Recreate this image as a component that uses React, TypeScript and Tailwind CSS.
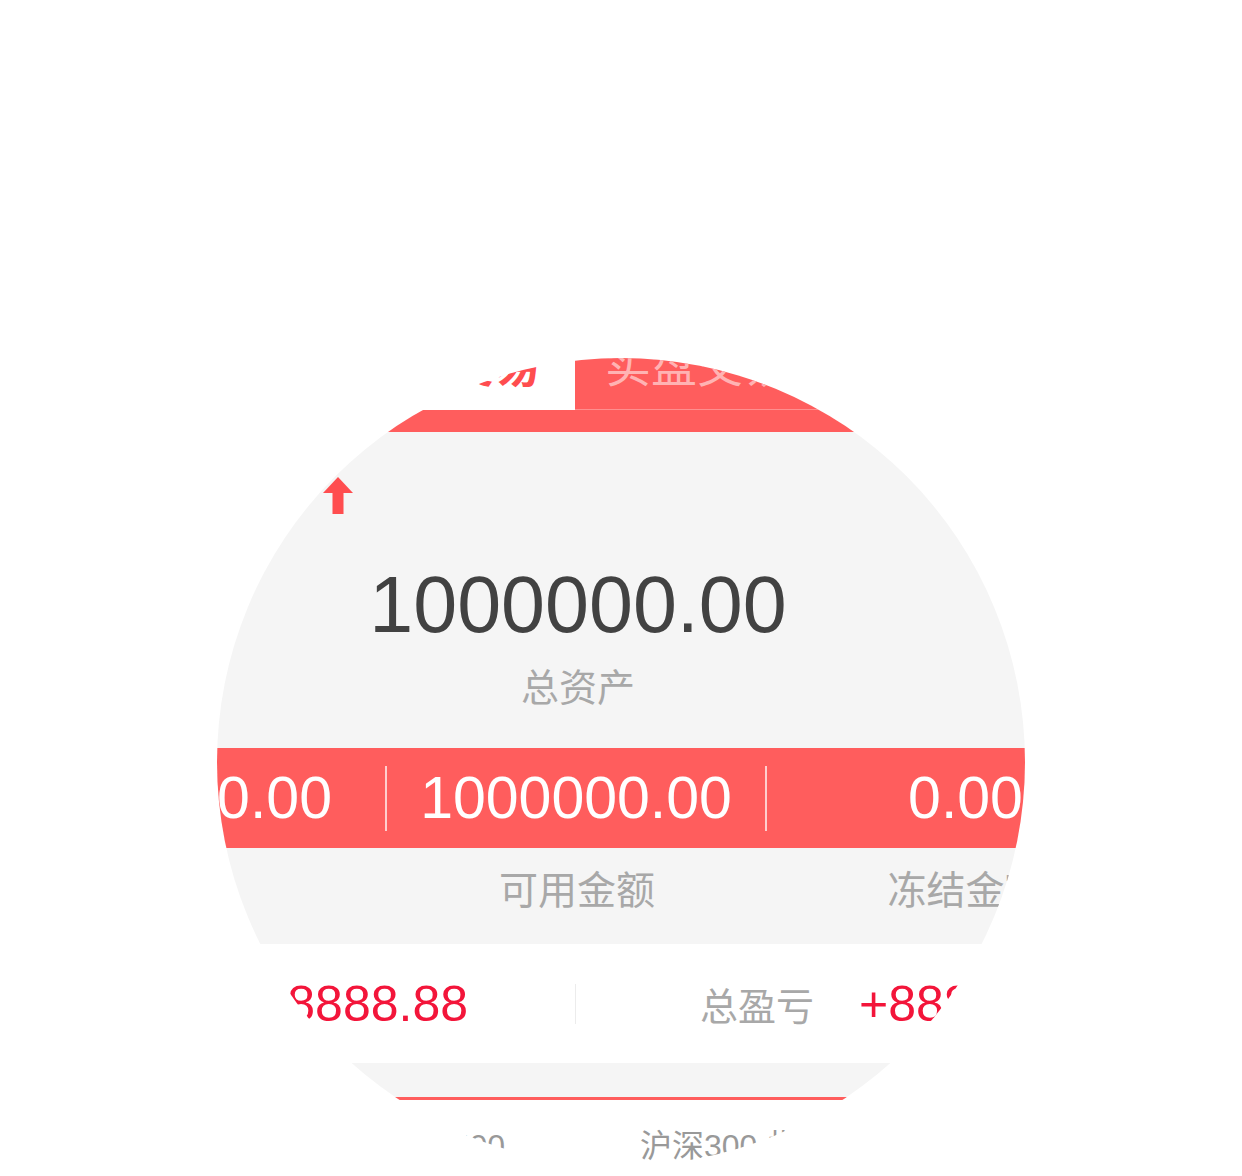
import React from "react";

// zoomed-in view of an account summary screen, clipped to a round lens
function UpArrow() {
  return (
    <svg width="30" height="37" viewBox="0 0 30 37" fill="#ff4d4f">
      <polygon points="0,16 15,0 30,16" />
      <rect x="9.5" y="15" width="11" height="22" />
    </svg>
  );
}

function StatCol({ value, className }: { value: string; className: string }) {
  return (
    <div className={className}>
      <span>{value}</span>
    </div>
  );
}

export default function App() {
  return (
    <div className="w-[1242px] h-[1176px] bg-white pt-[358px] pl-[217px] font-['Liberation_Sans','Noto_Sans_CJK_SC',sans-serif]">
      <div className="w-[808px] h-[808px] rounded-full overflow-hidden">
        <div className="-ml-[217px] -mt-[48px] w-[1156px]">
          {/* tabs */}
          <div className="flex h-[100px]">
            <div className="w-[575px] bg-white flex justify-end pr-[35px] pt-[33px]">
              <span className="text-[46px] leading-none text-[#ff4d4f] font-bold">模拟交易</span>
            </div>
            <div className="flex-1 bg-[#ff5d5d] border-b border-white/30 pl-[30px] pt-[33px]">
              <span className="text-[46px] leading-none text-[#ffb3b3]">实盘交易</span>
            </div>
          </div>
          <div className="h-[22px] bg-[#ff5d5d]" />

          {/* total assets */}
          <div className="h-[316px] bg-[#f5f5f5] pt-[45px]">
            <div className="pl-[323px]">
              <UpArrow />
            </div>
            <div className="mt-[51px] text-center text-[79px] leading-none text-[#424242]">1000000.00</div>
            <div className="mt-[22px] text-center text-[38px] leading-none text-[#a8a8a8] font-['Noto_Sans_CJK_SC',sans-serif]">
              总资产
            </div>
          </div>

          {/* red band */}
          <div className="h-[100px] bg-[#ff5d5d] flex items-center text-white text-[59px] leading-none">
            <StatCol value="100000.00" className="w-[385px] text-center" />
            <div className="w-[2px] h-[65px] bg-white/70" />
            <StatCol value="1000000.00" className="w-[378px] text-center" />
            <div className="w-[2px] h-[65px] bg-white/70" />
            <StatCol value="0.00" className="flex-1 pl-[8px] text-center" />
          </div>

          {/* labels */}
          <div className="h-[96px] bg-[#f5f5f5] flex pt-[20px] text-[39px] leading-none text-[#a8a8a8] font-['Noto_Sans_CJK_SC',sans-serif]">
            <div className="w-[387px] text-right pr-[153px]">持仓市值</div>
            <div className="w-[380px] text-center">可用金额</div>
            <div className="flex-1 pl-[8px] text-center">冻结金额</div>
          </div>

          {/* profit row */}
          <div className="h-[119px] bg-white flex items-center">
            <div className="w-[575px] flex items-center justify-end pr-[107px]">
              <span className="text-[38px] leading-none text-[#a8a8a8] font-['Noto_Sans_CJK_SC',sans-serif]">当日盈亏</span>
              <span className="ml-[45px] text-[50px] leading-none text-[#f3153a]">+8888.88</span>
            </div>
            <div className="w-px h-[40px] bg-[#ececec]" />
            <div className="flex-1 flex items-center pl-[124px]">
              <span className="text-[38px] leading-none text-[#a8a8a8] font-['Noto_Sans_CJK_SC',sans-serif]">总盈亏</span>
              <span className="ml-[45px] text-[50px] leading-none text-[#f3153a]">+8888.88</span>
            </div>
          </div>

          <div className="h-[34px] bg-[#f5f5f5]" />
          <div className="h-[3px] bg-[#ff5d5d]" />

          {/* index tabs */}
          <div className="h-[120px] bg-white flex pt-[30px] text-[32px] leading-none text-[#999999]">
            <div className="w-[505px] text-right">中证500</div>
            <div className="pl-[135px]">沪深300·指数</div>
          </div>
        </div>
      </div>
    </div>
  );
}
